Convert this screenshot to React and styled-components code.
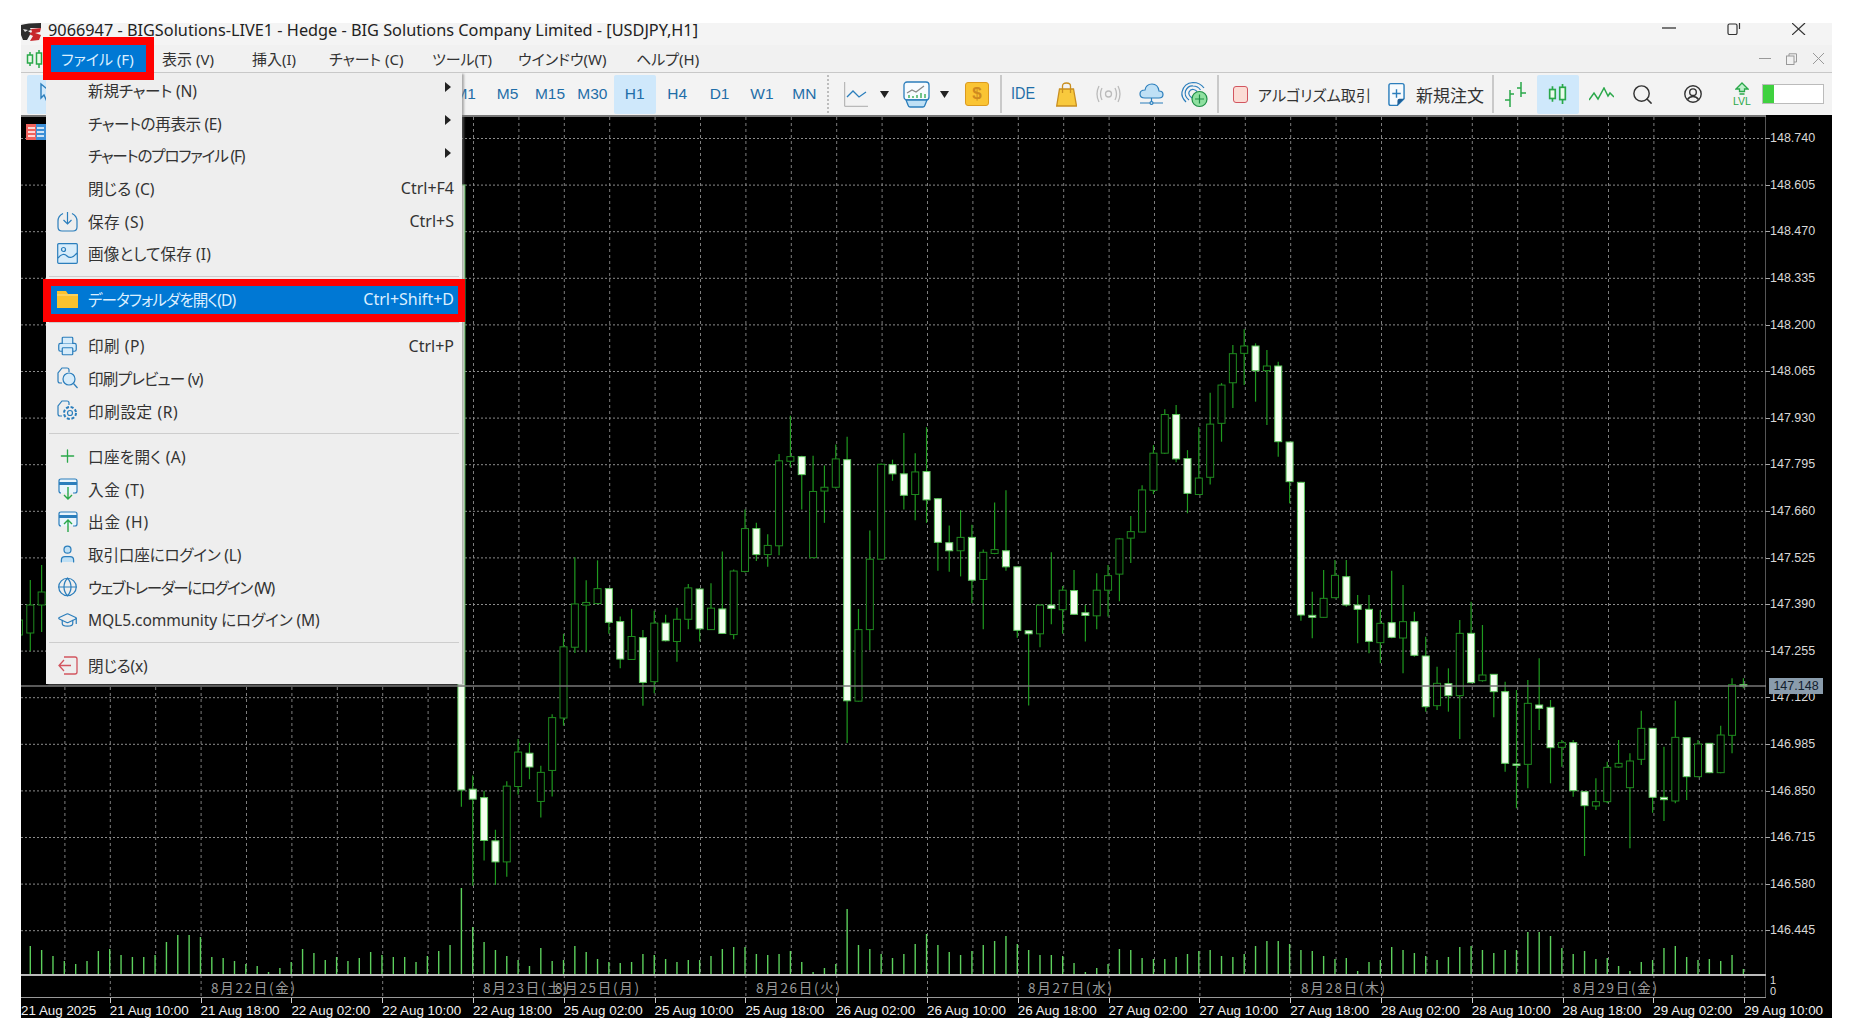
import React from "react";
import styled, { createGlobalStyle } from "styled-components";
import { Globe, GraduationCap, Plus, Printer, Search, User } from "lucide-react";

const GlobalStyle = createGlobalStyle`
  html, body { margin: 0; padding: 0; background: #fff; }
  body { font-family: "Noto Sans", "Noto Sans CJK JP", sans-serif; }
`;

const ui = `"Noto Sans", "Noto Sans CJK JP", sans-serif`;
const blue = "#2b7ebc";
const pale = "#bfe0f5";
const green = "#2aa84a";

// candles traced from the chart: [wick top, body top, body bottom, wick bottom, filled]
const tracedA = [
  [-353, -353, 1228, 1272, 1], [1190, 1226, 1252, 1478, 1], [1230, 1248, 1360, 1412, 1], [1332, 1361, 1416, 1476, 1],
  [1205, 1218, 1416, 1455, 0], [1095, 1129, 1219, 1240, 0], [1105, 1132, 1168, 1200, 1], [1165, 1182, 1258, 1300, 0],
  [1030, 1039, 1177, 1245, 0], [820, 854, 1040, 1060, 0], [620, 742, 855, 870, 0], [680, 738, 745, 868, 0],
  [628, 702, 741, 742, 0], [700, 702, 790, 820, 1], [775, 788, 886, 910, 1], [755, 827, 887, 888, 0],
  [810, 830, 947, 1008, 1], [760, 792, 945, 975, 0], [770, 792, 838, 840, 1], [752, 782, 840, 893, 0],
  [690, 700, 782, 808, 0], [700, 703, 807, 840, 1], [688, 753, 809, 810, 0], [605, 755, 819, 820, 1],
  [652, 656, 822, 834, 0], [495, 545, 657, 660, 0], [530, 545, 613, 630, 1], [560, 589, 613, 645, 0],
  [350, 368, 590, 615, 0], [250, 357, 369, 385, 0], [355, 357, 404, 495, 1], [355, 448, 621, 622, 0],
  [380, 437, 447, 530, 0], [325, 363, 437, 440, 0], [305, 365, 995, 1105, 1], [755, 809, 996, 997, 0],
  [550, 625, 809, 862, 0], [375, 377, 625, 626, 0], [365, 378, 402, 420, 1], [295, 402, 458, 495, 1],
  [348, 397, 456, 523, 0], [280, 396, 470, 530, 1], [465, 467, 581, 655, 1], [537, 582, 603, 658, 1],
  [497, 568, 603, 670, 0], [535, 568, 680, 740, 1], [600, 607, 678, 808, 0], [477, 600, 610, 612, 0],
  [445, 603, 645, 655, 1], [645, 645, 811, 830, 1], [810, 812, 820, 1007, 1], [743, 745, 820, 855, 0],
  [607, 745, 754, 795, 1], [695, 706, 757, 820, 0], [653, 707, 769, 770, 1], [745, 765, 772, 840, 1],
  [662, 706, 773, 808, 0], [640, 668, 706, 775, 0], [570, 572, 664, 735, 0], [512, 553, 570, 635, 0],
  [432, 444, 554, 555, 0], [327, 348, 445, 455, 0], [233, 247, 348, 350, 0], [222, 247, 363, 372, 1],
  [340, 362, 453, 505, 1], [280, 413, 456, 457, 0], [190, 272, 411, 430, 0], [165, 170, 270, 318, 0],
  [65, 88, 164, 230, 0],
];
const tracedB = [
  [88, 138, 160, 255, 0], [130, 138, 212, 305, 1], [150, 198, 212, 375, 0], [185, 198, 425, 470, 1],
  [425, 426, 545, 610, 1], [545, 547, 945, 962, 1], [875, 946, 952, 1015, 1], [810, 895, 952, 953, 0],
  [780, 826, 893, 895, 0], [780, 830, 915, 920, 1], [885, 915, 928, 1030, 1], [885, 928, 1024, 1060, 1],
  [930, 970, 1028, 1090, 0], [812, 968, 1012, 1015, 1], [855, 965, 1014, 1120, 0], [935, 965, 1066, 1070, 1],
];
const tracedC = [
  [-10, 48, 200, 215, 1], [80, 130, 197, 210, 0], [85, 131, 167, 215, 1], [-60, -20, 167, 297, 0],
  [-115, -20, 128, 130, 1], [-45, 105, 122, 125, 0], [103, 103, 155, 232, 1], [125, 155, 370, 395, 1],
  [150, 372, 375, 505, 1], [120, 190, 373, 445, 0], [55, 195, 205, 270, 1], [180, 202, 323, 430, 1],
  [300, 308, 322, 380, 0], [300, 308, 452, 470, 1], [455, 455, 497, 648, 1], [415, 485, 498, 510, 0],
  [365, 382, 485, 490, 0], [300, 370, 381, 383, 0], [340, 363, 443, 625, 0], [212, 265, 358, 375, 0],
  [265, 265, 472, 518, 1], [320, 472, 479, 543, 1], [182, 292, 483, 490, 0], [293, 293, 410, 480, 1],
  [300, 312, 410, 412, 0], [310, 310, 398, 400, 1], [257, 285, 398, 400, 0], [115, 134, 286, 340, 0],
  [115, 134, 137, 145, 1],
];
const candles = [
  ...tracedA.map(c => [...c.slice(0, 4).map(v => 320 + v / 2.613), c[4]]),
  ...tracedB.map(c => [...c.slice(0, 4).map(v => 300 + v / 3), c[4]]),
  ...tracedC.map(c => [...c.slice(0, 4).map(v => 640 + v / 3), c[4]]),
];
const leftCandles = [
  { k: -39, c: [600, 620, 635, 650, 0] },
  { k: -38, c: [580, 605, 633, 651, 0] },
  { k: -37, c: [565, 592, 605, 632, 0] },
];

// volumes start 38 bars to the left of the first candle above
const volumes = [
  28, 24, 18, 13, 10, 13, 23, 25, 19, 17, 17, 19, 32, 39, 39, 37, 17, 16, 13, 10, 8, 2, 6, 12, 25, 21, 14, 17, 13, 16, 22, 19, 17, 17, 12, 18, 23, 29,
  86, 47, 32, 24, 18, 14, 8, 26, 13, 14, 28, 22, 15, 12, 11, 12, 20, 19, 15, 12, 14, 14, 18, 25, 27, 27, 20, 19, 20, 23, 12, 2, 6, 10, 65, 29, 25, 20, 16,
  20, 30, 40, 29, 22, 19, 23, 29, 33, 38, 30, 24, 19, 19, 18, 11, 2, 6, 10, 25, 24, 16, 15, 15, 17, 20, 23, 24, 18, 17,
  20, 28, 33, 33, 30, 24, 23, 18, 15, 16, 3, 12, 14, 27, 24, 21, 18, 14, 17, 27, 28, 24, 21, 24, 24, 42, 42, 38, 26, 20,
  23, 15, 16, 8, 3, 12, 14, 26, 28, 17, 14, 15, 13, 19, 5,
];

const prices = ["148.740", "148.605", "148.470", "148.335", "148.200", "148.065", "147.930", "147.795", "147.660", "147.525", "147.390", "147.255", "147.120", "146.985", "146.850", "146.715", "146.580", "146.445"];
const times = ["21 Aug 2025", "21 Aug 10:00", "21 Aug 18:00", "22 Aug 02:00", "22 Aug 10:00", "22 Aug 18:00", "25 Aug 02:00", "25 Aug 10:00", "25 Aug 18:00", "26 Aug 02:00", "26 Aug 10:00", "26 Aug 18:00", "27 Aug 02:00", "27 Aug 10:00", "27 Aug 18:00", "28 Aug 02:00", "28 Aug 10:00", "28 Aug 18:00", "29 Aug 02:00", "29 Aug 10:00"];
const dates = [
  { x: 211, t: "8月22日(金)" }, { x: 483, t: "8月23日(土)" }, { x: 555, t: "8月25日(月)" }, { x: 756, t: "8月26日(火)" },
  { x: 1028, t: "8月27日(水)" }, { x: 1301, t: "8月28日(木)" }, { x: 1573, t: "8月29日(金)" },
];
const frames = ["M1", "M5", "M15", "M30", "H1", "H4", "D1", "W1", "MN"];

const barX = k => 461.4 + k * 11.345;

const Candle = ({ x, c }) => {
  const [top, bodyTop, bodyBottom, bottom, filled] = c;
  return (
    <g>
      <line x1={x} x2={x} y1={top} y2={bottom} stroke="#1f9a1f" strokeWidth="1.2" />
      <rect x={x - 3.5} y={bodyTop} width="7" height={Math.max(bodyBottom - bodyTop, 1.5)}
        fill={filled ? "#f4fff0" : "#000"} stroke={filled ? "#5fc85f" : "#1f8a1f"} strokeWidth="1" />
    </g>
  );
};

const ChartDrawing = () => (
  <svg width="1745" height="883" viewBox="21 115 1745 883" style={{ display: "block", gridColumn: 1, gridRow: 1 }}>
    {Array.from({ length: 39 }, (_, i) => (
      <line key={i} x1={19.5 + i * 45.4} x2={19.5 + i * 45.4} y1="117" y2={i % 2 ? 975 : 998} stroke="#7d7d7d" strokeDasharray="3 3" />
    ))}
    {prices.map((p, i) => (
      <line key={p} x1="21" x2="1766" y1={138.5 + i * 46.6} y2={138.5 + i * 46.6} stroke="#8c8c8c" strokeDasharray="2 2" />
    ))}
    {volumes.map((h, i) => (
      <line key={i} x1={barX(i - 38)} x2={barX(i - 38)} y1={974 - h} y2="974" stroke="#5ccf5c" strokeWidth="1.4" />
    ))}
    {leftCandles.map(({ k, c }) => <Candle key={k} x={barX(k)} c={c} />)}
    {candles.map((c, i) => <Candle key={i} x={barX(i)} c={c} />)}
    <line x1="21" x2="1766" y1="686" y2="686" stroke="#777" strokeWidth="1.5" />
    <line x1="21" x2="1767" y1="116" y2="116" stroke="#777" strokeWidth="2" />
    <line x1="1766" x2="1766" y1="116" y2="998" stroke="#aaa" />
    <line x1="21" x2="1766" y1="975" y2="975" stroke="#bbb" strokeWidth="2" />
    <line x1="21" x2="1766" y1="998" y2="998" stroke="#999" strokeWidth="2" />
  </svg>
);

const LogoIcon = () => (
  <svg width="20" height="18" viewBox="0 0 20 18">
    <path d="M0 2q6-2 20-2v5H9l1 2-3 1 3 2-4 7H2L0 12z" fill="#2e2e2e" />
    <path d="M10 6l10-1-1 4-5 1 6 2-2 5-9 1 3-5-4-2 3-2z" fill="#c8262b" />
    <path d="M2 6l5 1-3 2z" fill="#ddd" />
  </svg>
);

const CandlesIcon = ({ w = 17, h = 20 }) => (
  <svg width={w} height={h} viewBox="0 0 17 20" fill="none" stroke={green} strokeWidth="1.5">
    <path d="M4 3v14M13 1v18" />
    <rect x="1.5" y="6" width="5" height="8" fill="#eafbea" />
    <rect x="10.5" y="4" width="5" height="11" fill="#eafbea" />
  </svg>
);

const MinimizeGlyph = () => <svg width="14" height="12" viewBox="0 0 14 12"><path d="M0 5h14" stroke="#333" strokeWidth="1.3" /></svg>;
const RestoreGlyph = () => <svg width="14" height="12" viewBox="0 0 14 12" fill="none" stroke="#333" strokeWidth="1.2"><rect x="1" y="1" width="9" height="10.5" rx="1.5" /><path d="M12.5 0v6" /></svg>;
const CloseGlyph = () => <svg width="14" height="12" viewBox="0 0 14 12"><path d="M0 0l13 12M13 0L0 12" stroke="#333" strokeWidth="1.2" /></svg>;
const SmallRestore = () => <svg width="11" height="12" viewBox="0 0 11 12" fill="none" stroke="#999"><rect x=".5" y="3" width="7.5" height="8.5" /><path d="M3 3V.8h7.5V9H8" /></svg>;
const SmallClose = () => <svg width="11" height="11" viewBox="0 0 11 11"><path d="M0 0l11 11M11 0L0 11" stroke="#999" /></svg>;
const SmallMin = () => <svg width="12" height="3" viewBox="0 0 12 3"><path d="M0 1.5h12" stroke="#999" /></svg>;

const CursorIcon = () => (
  <svg width="14" height="24" viewBox="0 0 14 24" fill="#cfe8fb" stroke={blue} strokeWidth="1.4"><path d="M2 2l11 9-5 1 4 9-3 1-4-9-3 3z" /></svg>
);
const LineToolIcon = () => (
  <svg width="24" height="25" viewBox="0 0 24 25" fill="none"><path d="M.7 0v24.3H24" stroke="#aaa" /><path d="M3 15l6-6 6 6 7-5" stroke={blue} strokeWidth="1.3" /></svg>
);
const Caret = () => <svg width="9" height="7" viewBox="0 0 9 7"><path d="M0 0h9L4.5 7z" fill="#222" /></svg>;
const PanelIcon = () => (
  <svg width="27" height="27" viewBox="0 0 27 27" fill="none" stroke={blue} strokeWidth="1.3">
    <rect x="1" y="1" width="25" height="18" rx="3" fill="#f7fbfe" />
    <path d="M4 12l5-3 4 2 8-6" stroke="#8a8a8a" />
    <path d="M6 17v-3M10 17v-2M14 17v-3M18 17v-5M22 17v-4" stroke={green} />
    <path d="M3 19h21l-2 5q-.5 2-2 2H7q-1.500 0-2-2z" fill={pale} />
  </svg>
);
const BagIcon = () => (
  <svg width="21" height="25" viewBox="0 0 21 25" fill="#f8c93d" stroke="#c98f20" strokeWidth="1.3">
    <path d="M3.500 7h14l3 17H.7z" />
    <path d="M6.500 11V4q0-3 4-3t4 3v7" fill="none" />
  </svg>
);
const SignalIcon = () => (
  <svg width="25" height="18" viewBox="0 0 25 18" fill="none" stroke="#bbb" strokeWidth="1.3">
    <circle cx="12.500" cy="9" r="3" />
    <path d="M6 3q-3 6 0 12M19 3q3 6 0 12M3 1q-4 8 0 16M22 1q4 8 0 16" />
  </svg>
);
const CloudIcon = () => (
  <svg width="25" height="25" viewBox="0 0 25 25" fill={pale} stroke={blue} strokeWidth="1.2">
    <path d="M6 16q-5 0-5-4t5-4q1-6 7-6t7 7q4 0 4 3.500T20 16z" />
    <path d="M12.500 16v5M1 21h23" fill="none" />
    <circle cx="12.500" cy="21" r="1.500" />
  </svg>
);
const ReachIcon = () => (
  <svg width="28" height="27" viewBox="0 0 28 27" fill="none" stroke={blue} strokeWidth="1.2">
    <path d="M6 21Q1 16 2 11 4 2 13 1.500 20 1.500 24 7" />
    <path d="M9 19Q4 15 5.500 10 8 4.500 13 5q5 0 7.500 4" />
    <path d="M12 17Q8 14 9 11q1.500-3 4.500-2.500 2 .3 3.500 2" />
    <circle cx="19.500" cy="18" r="7.500" fill="#8fe0a0" stroke="#1f8f45" />
    <path d="M19.500 13.500v9M15 18h9" stroke="#1f8f45" />
  </svg>
);
const OrderIcon = () => (
  <svg width="18" height="25" viewBox="0 0 18 25" fill="#f7fbfe" stroke={blue} strokeWidth="1.5">
    <path d="M3 1h12q2 0 2 2v14l-7 7H3q-2 0-2-2V3q0-2 2-2z" />
    <path d="M17 17h-5q-2 0-2 2v5z" fill="#1f5f96" stroke="none" />
    <path d="M9 7v9M4.500 11.500h9" fill="none" />
  </svg>
);
const OhlcIcon = () => (
  <svg width="25" height="26" viewBox="0 0 25 26" fill="none" stroke={green} strokeWidth="1.5">
    <path d="M6 9v17M1 19h5M6 13h4M17 1v15M13 7h4M17 12h5" />
  </svg>
);
const ZigzagIcon = () => (
  <svg width="25" height="14" viewBox="0 0 25 14" fill="none" stroke={green} strokeWidth="1.5"><path d="M0 13l5-7 4 6 6-11 4 8 2-3 4 4" /></svg>
);
const AccountIcon = () => (
  <svg width="18" height="18" viewBox="0 0 18 18" fill="none" stroke="#333" strokeWidth="1.4">
    <circle cx="9" cy="9" r="8.200" />
    <circle cx="9" cy="7.200" r="3.300" />
    <path d="M3.500 14.500q2-3 5.500-3t5.500 3" />
  </svg>
);
const UpArrow = () => (
  <svg width="14" height="14" viewBox="0 0 14 14" fill="#bff0cc" stroke={green} strokeWidth="1.3"><path d="M7 1l6 6H9.500v2.500h-5V7H1zM4.500 12h5" /></svg>
);

const SaveIcon = () => (
  <svg width="21" height="21" viewBox="0 0 21 21" fill="none" stroke={blue} strokeWidth="1.2">
    <path d="M6 2.500C3 4 1 6 1 10v6q0 4 4 4h11q4 0 4-4v-6c0-4-2-6-5-7.500" />
    <path d="M10.500 1v11M6.500 9l4 4 4-4" />
  </svg>
);
const ImageIcon = () => (
  <svg width="21" height="21" viewBox="0 0 21 21" fill="#d7ecfa" stroke={blue} strokeWidth="1.2">
    <rect x=".7" y=".7" width="19.600" height="19.600" rx="1" />
    <circle cx="6.500" cy="6.500" r="2" fill="none" />
    <path d="M1 15q5-6 9-2t10-3" fill="none" />
  </svg>
);
const FolderIcon = () => (
  <svg width="21" height="18" viewBox="0 0 21 18"><path d="M0 1h9l2 3h10v14H0z" fill="#f9c22e" /><path d="M0 5h21" stroke="#fbe08a" /></svg>
);
const PreviewIcon = () => (
  <svg width="21" height="22" viewBox="0 0 21 22" fill="none" stroke={blue} strokeWidth="1.2">
    <path d="M5 16H3q-2 0-2-2V6l4-5h5q2 0 2 2v2" />
    <circle cx="12" cy="12" r="6" fill="#d7ecfa" />
    <path d="M16.500 16.500L20.500 21" />
  </svg>
);
const PrintSetupIcon = () => (
  <svg width="21" height="22" viewBox="0 0 21 22" fill="none" stroke={blue} strokeWidth="1.2">
    <path d="M5 16H3q-2 0-2-2V6l4-5h5q2 0 2 2v2" />
    <circle cx="13" cy="13" r="2.500" />
    <circle cx="13" cy="13" r="6" strokeDasharray="3 1.700" strokeWidth="2" />
  </svg>
);
const CardIcon = ({ down }) => (
  <svg width="20" height="22" viewBox="0 0 20 22" fill="none">
    <path d="M3 15q-2 0-2-2V3q0-2 2-2h14q2 0 2 2v10q0 2-2 2h-2" stroke={blue} strokeWidth="1.2" fill="#eaf5fc" />
    <path d="M1 5.500h18" stroke={blue} strokeWidth="3" />
    <path d={down ? "M10 9v12M6 17l4 4 4-4" : "M10 21V9M6 13l4-4 4 4"} stroke={green} strokeWidth="1.4" />
  </svg>
);
const ExitIcon = () => (
  <svg width="20" height="19" viewBox="0 0 20 19" fill="none" stroke="#d2555f" strokeWidth="1.3">
    <path d="M6 1h11q2 0 2 2v13q0 2-2 2H6" />
    <path d="M13 9.500H1M6 4L1 9.500 6 15" />
  </svg>
);
const iconProps = { size: 22, color: blue, strokeWidth: 1.4 };

// sp: letter spacing that brings each label to the width it has in the app's proportional UI font
const menuGroups = [
  [
    { label: "新規チャート (N)", sub: true, sp: -0.2 },
    { label: "チャートの再表示 (E)", sub: true, sp: -0.4 },
    { label: "チャートのプロファイル (F)", sub: true, sp: -1.2 },
    { label: "閉じる (C)", key: "Ctrl+F4" },
    { label: "保存 (S)", key: "Ctrl+S", icon: <SaveIcon />, sp: 0.5 },
    { label: "画像として保存 (I)", icon: <ImageIcon />, sp: 0.1 },
  ],
  [{ label: "データフォルダを開く(D)", key: "Ctrl+Shift+D", icon: <FolderIcon />, active: true, sp: -0.9 }],
  [
    { label: "印刷 (P)", key: "Ctrl+P", icon: <Printer {...iconProps} fill="#d7ecfa" />, sp: 0.5 },
    { label: "印刷プレビュー (v)", icon: <PreviewIcon />, sp: -0.8 },
    { label: "印刷設定 (R)", icon: <PrintSetupIcon />, sp: 0.6 },
  ],
  [
    { label: "口座を開く (A)", icon: <Plus size={24} color={green} strokeWidth={1.5} />, sp: 0.3 },
    { label: "入金 (T)", icon: <CardIcon down />, sp: 0.6 },
    { label: "出金 (H)", icon: <CardIcon />, sp: 0.8 },
    { label: "取引口座にログイン (L)", icon: <User {...iconProps} fill={pale} />, sp: -0.2 },
    { label: "ウェブトレーダーにログイン (W)", icon: <Globe {...iconProps} />, sp: -1.5 },
    { label: "MQL5.community にログイン (M)", icon: <GraduationCap {...iconProps} />, sp: -0.1 },
  ],
  [{ label: "閉じる(x)", icon: <ExitIcon />, sp: -0.2 }],
];

const menus = [
  { label: "表示 (V)", w: 90 }, { label: "挿入(I)", w: 77 }, { label: "チャート (C)", w: 103 },
  { label: "ツール(T)", w: 86 }, { label: "ウインドウ(W)", w: 118 }, { label: "ヘルプ(H)", w: 90 },
];

export default function App() {
  return (
    <Page>
      <GlobalStyle />
      <Window>
        <TitleBar>
          <LogoIcon />
          <Title>9066947 - BIGSolutions-LIVE1 - Hedge - BIG Solutions Company Limited - [USDJPY,H1]</Title>
          <WindowButton><MinimizeGlyph /></WindowButton>
          <WindowButton><RestoreGlyph /></WindowButton>
          <WindowButton><CloseGlyph /></WindowButton>
        </TitleBar>

        <MenuBar>
          <MenuBarIcon><CandlesIcon /></MenuBarIcon>
          <OpenMenuLabel>ファイル (F)</OpenMenuLabel>
          {menus.map(m => <MenuLabel key={m.label} $w={m.w}>{m.label}</MenuLabel>)}
          <ChildControls>
            <ChildButton><SmallMin /></ChildButton>
            <ChildButton><SmallRestore /></ChildButton>
            <ChildButton><SmallClose /></ChildButton>
          </ChildControls>
        </MenuBar>

        <Toolbar>
          <CursorButton><CursorIcon /></CursorButton>
          <FrameGroup>
            {frames.map(f => <FrameButton key={f} $on={f === "H1"}>{f}</FrameButton>)}
          </FrameGroup>
          <Divider $ml={1.4} $dotted />
          <Tool $ml={15} $w={24}><LineToolIcon /></Tool>
          <Tool $ml={12} $w={9}><Caret /></Tool>
          <Tool $ml={14} $w={27}><PanelIcon /></Tool>
          <Tool $ml={10} $w={9}><Caret /></Tool>
          <Dollar>$</Dollar>
          <Divider $ml={11} />
          <IdeLabel>IDE</IdeLabel>
          <Tool $ml={20} $w={21}><BagIcon /></Tool>
          <Tool $ml={19} $w={25}><SignalIcon /></Tool>
          <Tool $ml={18} $w={25}><CloudIcon /></Tool>
          <Tool $ml={16} $w={28}><ReachIcon /></Tool>
          <Divider $ml={9} />
          <AlgoBox />
          <ToolText $ml={10} $w={110} $size={15.2}>アルゴリズム取引</ToolText>
          <Tool $ml={20} $w={17}><OrderIcon /></Tool>
          <ToolText $ml={11} $w={68} $size={17}>新規注文</ToolText>
          <Divider $ml={8} />
          <Tool $ml={10} $w={25}><OhlcIcon /></Tool>
          <SelectedTool><CandlesIcon w={19} h={24} /></SelectedTool>
          <Tool $ml={10} $w={25}><ZigzagIcon /></Tool>
          <Tool $ml={20} $w={18}><Search size={23} color="#333" strokeWidth={1.5} style={{ flex: "none" }} /></Tool>
          <Tool $ml={32} $w={18}><AccountIcon /></Tool>
          <LevelBadge><UpArrow /><span>LVL</span></LevelBadge>
          <Progress><ProgressFill /></Progress>
        </Toolbar>

        <ChartArea>
          <ChartDrawing />
          <PriceAxis>
            {prices.map(p => <PriceRow key={p}>{p}</PriceRow>)}
            <PriceTag>147.148</PriceTag>
            <VolumeScale>1<br />0</VolumeScale>
          </PriceAxis>
          <TimeAxis>
            {times.map(t => <TimeCell key={t}>{t}</TimeCell>)}
          </TimeAxis>
          <DateRow>
            {dates.map(d => <DateLabel key={d.t} style={{ left: d.x - 21 }}>{d.t}</DateLabel>)}
          </DateRow>
          <OneClick>
            <svg width="20" height="16" viewBox="0 0 20 16">
              <rect width="10" height="16" fill="#f0625d" />
              <rect x="10" width="10" height="16" fill="#3d8fd6" />
              <path d="M2 4h7M2 8h7M2 12h7M11 4h7M11 8h7M11 12h7" stroke="#fff" strokeWidth="1.6" />
            </svg>
          </OneClick>
        </ChartArea>

        <FileMenu>
          {menuGroups.map((group, g) => (
            <React.Fragment key={g}>
              {g > 0 && <MenuSeparator $hidden={g === 2} />}
              {group.map(item => (
                <MenuRow key={item.label} $active={item.active}>
                  <MenuIcon>{item.icon}</MenuIcon>
                  <MenuText $sp={item.sp || 0}>{item.label}</MenuText>
                  {item.key && <Shortcut>{item.key}</Shortcut>}
                  {item.sub && <SubArrow />}
                </MenuRow>
              ))}
            </React.Fragment>
          ))}
        </FileMenu>
      </Window>
    </Page>
  );
}

const Page = styled.div`
  width: 1853px;
  height: 1034px;
  overflow: hidden;
  background: #fff;
  padding: 23px 0 0 21px;
  box-sizing: border-box;
`;

const Window = styled.div`
  position: relative;
  width: 1811px;
  height: 995px;
`;

const TitleBar = styled.div`
  display: flex;
  height: 22px;
  background: #f4f4f4;
`;

const Title = styled.div`
  flex: 1;
  margin: -3px 0 0 7px;
  font: 16.3px/20px "Noto Sans", sans-serif;
  color: #222;
  white-space: nowrap;
`;

const WindowButton = styled.div`
  width: 65px;
  display: flex;
  justify-content: center;
  align-items: flex-start;
  &:last-child { margin-right: 1px; }
`;

const MenuBar = styled.div`
  position: relative;
  display: flex;
  align-items: stretch;
  height: 28px;
  box-sizing: border-box;
  background: #f1f1f1;
  border-bottom: 1px solid #c8c8c8;
  z-index: 3;
`;

const MenuBarIcon = styled.div`
  width: 30px;
  padding-left: 5px;
  box-sizing: border-box;
  display: flex;
  align-items: center;
`;

const MenuLabel = styled.div`
  display: flex;
  align-items: center;
  flex: none;
  width: ${p => p.$w}px;
  padding-left: 15px;
  box-sizing: border-box;
  font: 15px ${ui};
  font-feature-settings: "palt";
  color: #333;
  white-space: nowrap;
`;

const OpenMenuLabel = styled(MenuLabel)`
  position: relative;
  width: 96px;
  padding-left: 10px;
  color: #dcefff;
  background: #0078d4;
  &::after {
    content: "";
    position: absolute;
    inset: -8px -7px -8px -8px;
    border: 8px solid #ff0000;
  }
`;

const ChildControls = styled.div`
  margin-left: auto;
  display: flex;
`;

const ChildButton = styled.div`
  width: 27px;
  display: flex;
  align-items: center;
  justify-content: center;
`;

const Toolbar = styled.div`
  display: flex;
  align-items: center;
  height: 42px;
  padding-left: 6px;
  background: #f3f3f3;
`;

const CursorButton = styled.div`
  width: 35px;
  height: 39px;
  box-sizing: border-box;
  padding-left: 12px;
  display: flex;
  align-items: center;
  background: #cfe8fb;
  border-radius: 2px;
`;

const FrameGroup = styled.div`
  display: flex;
  margin-left: 382px;
`;

const FrameButton = styled.div`
  width: 42.4px;
  height: 39px;
  display: flex;
  align-items: center;
  justify-content: center;
  font: 15.5px "Liberation Sans", sans-serif;
  color: #1f6ea8;
  background: ${p => (p.$on ? "#cfe8fb" : "transparent")};
  border-radius: 2px;
`;

const Divider = styled.div`
  width: 2px;
  height: 38px;
  margin-left: ${p => p.$ml}px;
  ${p => (p.$dotted ? "border-left: 2px dotted #bdbdbd; box-sizing: border-box;" : "background: #c9c9c9;")}
`;

const Tool = styled.div`
  width: ${p => p.$w}px;
  margin-left: ${p => p.$ml}px;
  display: flex;
  align-items: center;
  justify-content: center;
  flex: none;
`;

const Dollar = styled.div`
  width: 24px;
  height: 24px;
  margin-left: 16px;
  box-sizing: border-box;
  border: 1px solid #dc9a1e;
  border-radius: 3px;
  background: #fac433;
  color: #cf8a1f;
  font: bold 17px/22px "Liberation Sans", sans-serif;
  text-align: center;
`;

const IdeLabel = styled.div`
  width: 25px;
  margin-left: 9px;
  font: 16px "Liberation Sans", sans-serif;
  transform: scaleX(.9);
  transform-origin: left;
  color: #1f6ea8;
  white-space: nowrap;
`;

const AlgoBox = styled.div`
  width: 15px;
  height: 17px;
  margin-left: 14px;
  box-sizing: border-box;
  border: 1.5px solid #d2555f;
  border-radius: 3px;
  background: #fbdcd5;
`;

const ToolText = styled.div`
  width: ${p => p.$w}px;
  margin-left: ${p => p.$ml}px;
  font: ${p => p.$size}px ${ui};
  font-feature-settings: "palt";
  color: #333;
  white-space: nowrap;
`;

const SelectedTool = styled.div`
  width: 42px;
  height: 39px;
  margin-left: 8px;
  display: flex;
  align-items: center;
  justify-content: center;
  background: #cfe8fb;
  border-radius: 2px;
`;

const LevelBadge = styled.div`
  width: 18px;
  margin-left: 31px;
  display: flex;
  flex-direction: column;
  align-items: center;
  font: 10.5px/10px "Liberation Sans", sans-serif;
  color: ${green};
`;

const Progress = styled.div`
  width: 62px;
  height: 20px;
  margin-left: 11px;
  box-sizing: border-box;
  border: 1px solid #bbb;
  background: #fff;
`;

const ProgressFill = styled.div`
  width: 11px;
  height: 100%;
  background: #3fd13f;
`;

const ChartArea = styled.div`
  position: relative;
  display: grid;
  grid-template-columns: 1745px 66px;
  grid-template-rows: 883px 20px;
  height: 903px;
  background: #000;
  overflow: hidden;
`;

const PriceAxis = styled.div`
  position: relative;
  grid-column: 2;
  grid-row: 1;
  display: flex;
  flex-direction: column;
`;

const PriceRow = styled.div`
  position: relative;
  flex: none;
  height: 46.6px;
  padding-left: 4px;
  display: flex;
  align-items: center;
  font: 12.5px "Liberation Sans", sans-serif;
  color: #d8d8d8;
  &::before {
    content: "";
    position: absolute;
    left: 0;
    top: 50%;
    width: 4px;
    height: 1px;
    background: #aaa;
  }
`;

const PriceTag = styled.div`
  position: absolute;
  left: 3px;
  top: 563px;
  width: 54px;
  height: 16px;
  background: #8a9cac;
  color: #12202c;
  font: 12.5px/16px "Liberation Sans", sans-serif;
  text-align: center;
`;

const VolumeScale = styled.div`
  position: absolute;
  left: 4px;
  top: 860px;
  font: 11px/11px "Liberation Sans", sans-serif;
  color: #ddd;
`;

const TimeAxis = styled.div`
  grid-column: 1 / 3;
  grid-row: 2;
  display: flex;
`;

const TimeCell = styled.div`
  position: relative;
  flex: none;
  width: 90.8px;
  padding-top: 5px;
  font: 13.4px/15px "Liberation Sans", sans-serif;
  color: #f0f0f0;
  white-space: nowrap;
  box-sizing: border-box;
  &:first-child { width: 88.8px; }
  &::before {
    content: "";
    position: absolute;
    left: 0;
    top: 0;
    width: 1px;
    height: 5px;
    background: #ccc;
  }
  &:first-child::before { display: none; }
`;

const DateRow = styled.div`
  position: absolute;
  left: 0;
  top: 860px;
  width: 1745px;
  height: 23px;
`;

const DateLabel = styled.div`
  position: absolute;
  top: 3px;
  font: 13.5px/18px "Noto Sans CJK JP", sans-serif;
  letter-spacing: 1.7px;
  color: #9a9a9a;
  white-space: nowrap;
`;

const OneClick = styled.div`
  position: absolute;
  left: 5px;
  top: 9px;
  line-height: 0;
`;

const FileMenu = styled.div`
  position: absolute;
  left: 25px;
  top: 50px;
  width: 416px;
  height: 611px;
  box-sizing: border-box;
  padding-top: 1px;
  background: #eeeeee;
  box-shadow: 2px 1px 2px rgba(120, 120, 120, .6);
  z-index: 2;
`;

const MenuRow = styled.div`
  position: relative;
  display: flex;
  align-items: center;
  height: 32.7px;
  padding: 0 8px 0 11px;
  color: ${p => (p.$active ? "#dcefff" : "#333")};
  background: ${p => (p.$active ? "#0078d4" : "transparent")};
  ${p => p.$active && `
    &::after {
      content: "";
      position: absolute;
      inset: -3.6px -3px -6.6px -3px;
      border: solid #ff0000;
      border-width: 7px 7px 8px 8px;
    }
  `}
`;

const MenuIcon = styled.div`
  width: 21px;
  height: 22px;
  margin-right: 10px;
  display: flex;
  align-items: center;
  justify-content: center;
  flex: none;
`;

const MenuText = styled.div`
  flex: 1;
  font: 15.6px ${ui};
  font-feature-settings: "palt";
  letter-spacing: ${p => p.$sp}px;
  white-space: nowrap;
`;

const Shortcut = styled.div`
  font: 16px "Noto Sans", sans-serif;
  white-space: nowrap;
`;

const SubArrow = styled.div`
  width: 0;
  height: 0;
  margin-right: 3px;
  border-style: solid;
  border-width: 5px 0 5px 6px;
  border-color: transparent transparent transparent #222;
  transform: translateY(-3px);
`;

const MenuSeparator = styled.div`
  height: ${p => (p.$hidden ? 14 : 12.6)}px;
  display: flex;
  align-items: center;
  padding: 0 3px;
  &::before {
    content: "";
    flex: 1;
    height: 1px;
    background: #cdcdcd;
  }
`;
